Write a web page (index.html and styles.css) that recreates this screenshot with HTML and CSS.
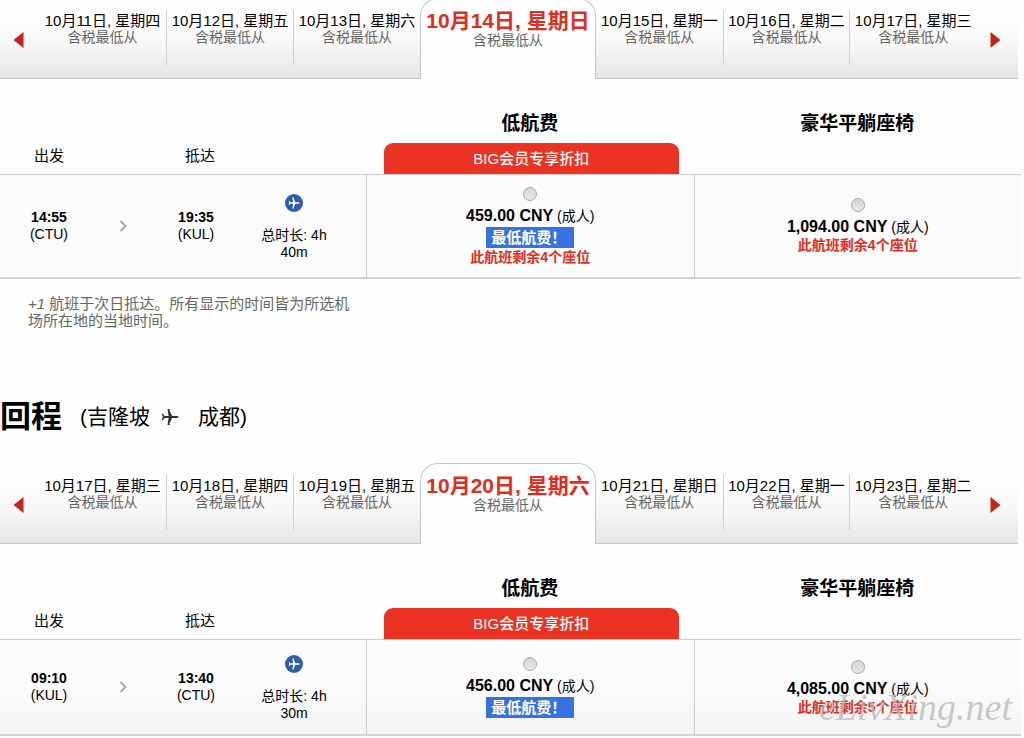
FILE: index.html
```html
<!DOCTYPE html>
<html lang="zh-CN">
<head>
<meta charset="utf-8">
<meta name="viewport" content="width=device-width, initial-scale=1">
<title>选择航班</title>
<link rel="stylesheet" href="styles.css">
</head>
<body>
<svg class="sprite" aria-hidden="true">
  <symbol id="plane" viewBox="0 0 20 20">
    <path d="M19.500 10c0-.8-1.200-1.200-2.600-1.200h-4.500L9.200 2.200l.8-.6V1H7.200l1.300 7.800H4L2.200 6.500H1L2 10l-1 3.500h1.200L4 11.200h4.500L7.200 19H10v-.6l-.8-.6 3.200-6.600h4.500c1.400 0 2.600-.4 2.600-1.200z"/>
  </symbol>
</svg>
<main>
  <section class="journey outbound" aria-label="去程">
    <nav class="dates" aria-label="去程日期">
      <div class="side">
        <button class="step" type="button" aria-label="上一周"><svg viewBox="0 0 10 16"><path d="M10 0v16L0 8z"/></svg></button>
        <a class="day" href="#d1011">10月11日, 星期四<small>含税最低从</small></a>
        <a class="day" href="#d1012">10月12日, 星期五<small>含税最低从</small></a>
        <a class="day" href="#d1013">10月13日, 星期六<small>含税最低从</small></a>
      </div>
      <a class="current" href="#d1014" aria-current="date">10月14日, 星期日<small>含税最低从</small></a>
      <div class="side next">
        <a class="day" href="#d1015">10月15日, 星期一<small>含税最低从</small></a>
        <a class="day" href="#d1016">10月16日, 星期二<small>含税最低从</small></a>
        <a class="day" href="#d1017">10月17日, 星期三<small>含税最低从</small></a>
        <button class="step" type="button" aria-label="下一周"><svg viewBox="0 0 10 16"><path d="M0 0v16l10-8z"/></svg></button>
      </div>
    </nav>
    <table class="flights">
      <colgroup><col class="c-time"><col class="c-arrow"><col class="c-time"><col class="c-length"><col><col></colgroup>
      <thead>
        <tr class="fares"><td colspan="4"></td><th scope="col">低航费</th><th scope="col">豪华平躺座椅</th></tr>
        <tr class="labels"><th scope="col">出发</th><td></td><th class="arrive" scope="col">抵达</th><td></td><td><div class="promo">BIG会员专享折扣</div></td><td></td></tr>
      </thead>
      <tbody>
        <tr>
          <td><b>14:55</b><br>(CTU)</td>
          <td><svg class="chevron" viewBox="0 0 8 12"><path d="M1.500 1l5 5-5 5"/></svg></td>
          <td><b>19:35</b><br>(KUL)</td>
          <td class="length"><svg class="badge" viewBox="0 0 18 18"><circle cx="9" cy="9" r="9"/><use href="#plane" x="3" y="3" width="12" height="12"/></svg><p>总时长: 4h 40m</p></td>
          <td class="fare"><label><input type="radio" name="out"><span class="price"><b>459.00 CNY</b> (成人)</span><span class="lowest">最低航费！</span><span class="seats">此航班剩余4个座位</span></label></td>
          <td class="fare"><label><input type="radio" name="out"><span class="price"><b>1,094.00 CNY</b> (成人)</span><span class="seats">此航班剩余4个座位</span></label></td>
        </tr>
      </tbody>
    </table>
    <p class="note"><i>+1</i> 航班于次日抵达。所有显示的时间皆为所选机场所在地的当地时间。</p>
  </section>

  <section class="journey return" aria-labelledby="return-title">
    <header class="title">
      <h2 id="return-title">回程</h2>
      <p class="route"><span>(吉隆坡</span><svg class="plane" viewBox="0 0 20 20"><use href="#plane"/></svg><span>成都)</span></p>
    </header>
    <nav class="dates" aria-label="回程日期">
      <div class="side">
        <button class="step" type="button" aria-label="上一周"><svg viewBox="0 0 10 16"><path d="M10 0v16L0 8z"/></svg></button>
        <a class="day" href="#r1017">10月17日, 星期三<small>含税最低从</small></a>
        <a class="day" href="#r1018">10月18日, 星期四<small>含税最低从</small></a>
        <a class="day" href="#r1019">10月19日, 星期五<small>含税最低从</small></a>
      </div>
      <a class="current" href="#r1020" aria-current="date">10月20日, 星期六<small>含税最低从</small></a>
      <div class="side next">
        <a class="day" href="#r1021">10月21日, 星期日<small>含税最低从</small></a>
        <a class="day" href="#r1022">10月22日, 星期一<small>含税最低从</small></a>
        <a class="day" href="#r1023">10月23日, 星期二<small>含税最低从</small></a>
        <button class="step" type="button" aria-label="下一周"><svg viewBox="0 0 10 16"><path d="M0 0v16l10-8z"/></svg></button>
      </div>
    </nav>
    <table class="flights shaded">
      <colgroup><col class="c-time"><col class="c-arrow"><col class="c-time"><col class="c-length"><col><col></colgroup>
      <thead>
        <tr class="fares"><td colspan="4"></td><th scope="col">低航费</th><th scope="col">豪华平躺座椅</th></tr>
        <tr class="labels"><th scope="col">出发</th><td></td><th class="arrive" scope="col">抵达</th><td></td><td><div class="promo">BIG会员专享折扣</div></td><td></td></tr>
      </thead>
      <tbody>
        <tr>
          <td><b>09:10</b><br>(KUL)</td>
          <td><svg class="chevron" viewBox="0 0 8 12"><path d="M1.500 1l5 5-5 5"/></svg></td>
          <td><b>13:40</b><br>(CTU)</td>
          <td class="length"><svg class="badge" viewBox="0 0 18 18"><circle cx="9" cy="9" r="9"/><use href="#plane" x="3" y="3" width="12" height="12"/></svg><p>总时长: 4h 30m</p></td>
          <td class="fare"><label><input type="radio" name="back"><span class="price"><b>456.00 CNY</b> (成人)</span><span class="lowest">最低航费！</span></label></td>
          <td class="fare"><label><input type="radio" name="back"><span class="price"><b>4,085.00 CNY</b> (成人)</span><span class="seats">此航班剩余5个座位</span></label></td>
        </tr>
      </tbody>
    </table>
    <span class="watermark">eLivXing.net</span>
  </section>
</main>
</body>
</html>
```

FILE: styles.css
```css
* { box-sizing: border-box; }

body {
  margin: 0;
  background: #fefefe;
  color: #000;
  font: 14px/17px "Liberation Sans", "Noto Sans CJK SC", sans-serif;
}

p, h2 { margin: 0; }
a { color: inherit; text-decoration: none; }
.sprite { display: none; }

main { overflow: hidden; }
.journey { position: relative; }
.outbound { margin-top: -2px; }

/* Date strip */
.dates {
  display: grid;
  grid-template-columns: 420fr 176px 422fr;
  margin-right: 6px;
}

.side {
  display: grid;
  grid-template-columns: 39px repeat(3, 1fr);
  align-items: start;
  padding-top: 12px;
  border-bottom: 1px solid #c8c8c8;
  background: linear-gradient(#fefefe 25%, #f6f6f6 60%, #e6e6e6);
}

.side.next { grid-template-columns: repeat(3, 1fr) 42px; }

.day {
  height: 55px;
  padding-top: 3px;
  font-size: 15px;
  line-height: 16px;
  text-align: center;
  white-space: nowrap;
}

.day + .day { border-left: 1px solid #d0d0d0; }

.day small, .current small {
  display: block;
  color: #666;
  font-size: 14px;
  font-weight: normal;
  line-height: 16px;
}

.current {
  height: 81px;
  padding-top: 10px;
  border: 1px solid #c8c8c8;
  border-bottom: 0;
  border-radius: 18px 18px 0 0;
  background: #fefefe;
  color: #e32b20;
  font-size: 21px;
  font-weight: bold;
  line-height: 24px;
  text-align: center;
  white-space: nowrap;
}

.current small { line-height: 15px; }

.step {
  display: flex;
  justify-content: center;
  align-items: center;
  height: 60px;
  padding: 0 2px 0 0;
  border: 0;
  background: none;
}

.step svg { width: 11px; height: 16px; fill: #c8231c; }

/* Flight table */
.flights {
  width: calc(100% - 3px);
  table-layout: fixed;
  border-spacing: 0;
  text-align: center;
}

.c-time { width: 98px; }
.c-arrow { width: 49px; }
.c-length { width: 121px; }
.flights td, .flights th { padding: 0; }

.flights .fares th {
  height: 64px;
  padding-bottom: 7px;
  font-size: 19px;
  line-height: 24px;
  vertical-align: bottom;
}

.flights .labels th {
  padding-top: 4px;
  font-size: 15px;
  font-weight: normal;
  line-height: 18px;
  vertical-align: top;
}

.flights .labels .arrive { padding-left: 8px; }

.promo {
  height: 31px;
  margin: 0 15px 0 18px;
  padding-top: 1px;
  border-radius: 9px 9px 0 0;
  background: #ea3323;
  color: #fff;
  font-size: 15px;
  font-weight: 500;
  line-height: 30px;
}

.flights tbody td {
  height: 105px;
  border-top: 1px solid #ccc;
  border-bottom: 2px solid #d4d4d4;
  background: #fbfbfb;
}

.flights.shaded tbody td {
  height: 97px;
  background: linear-gradient(#fcfcfc 40%, #f4f4f4);
}

.flights tbody .fare { border-left: 1px solid #ccc; }
.flights.shaded .fare { padding-top: 2px; }
.flights tbody .length { padding: 2px 23px 0 0; }
.length p { width: 70px; margin: 15px auto 0; }

.chevron {
  display: block;
  width: 8px;
  height: 12px;
  margin: 0 auto;
  fill: none;
  stroke: #aaa;
  stroke-width: 2;
}

.badge { display: block; width: 18px; height: 18px; margin: 0 auto; fill: #fff; }
.badge circle { fill: #2c5fa8; }

.fare label { display: flex; flex-direction: column; align-items: center; }

.fare input {
  appearance: none;
  width: 14px;
  height: 14px;
  margin: 0 0 5px;
  border: 1px solid #aaa;
  border-radius: 50%;
  background: linear-gradient(#d4d4d4, #e8e8e8);
}

.price { line-height: 19px; }
.price b { font-size: 16px; }

.lowest {
  margin: 1px 0;
  padding: 0 8px 0 5px;
  background: #3573e2;
  color: #fff;
  font-size: 15px;
  font-weight: bold;
  line-height: 21px;
}

.seats { color: #e32b20; font-weight: bold; }

.note {
  width: 332px;
  margin: 16px 0 0 28px;
  color: #666;
  font-size: 15px;
}

/* Return leg heading */
.title {
  display: flex;
  align-items: center;
  gap: 18px;
  margin-top: 68px;
  padding-bottom: 26px;
  line-height: 40px;
}

.title h2 { font-size: 31px; }
.route { display: flex; align-items: center; font-size: 21px; }
.plane { width: 20px; height: 18px; margin: 0 18px 0 10px; fill: #333; }

.watermark {
  position: absolute;
  right: 12px;
  bottom: 9px;
  color: rgba(184, 184, 184, .75);
  font: italic 38px/40px "Liberation Serif", serif;
  pointer-events: none;
}
```
